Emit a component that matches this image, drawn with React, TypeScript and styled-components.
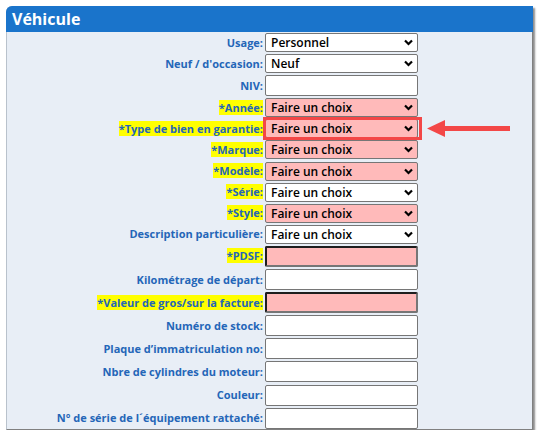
import { Fragment } from 'react'
import styled, { createGlobalStyle } from 'styled-components'

const GlobalStyle = createGlobalStyle`
	html, body {
		margin: 0;
		padding: 0;
		background: #ffffff;
	}
	body {
		font-family: 'Open Sans', 'Noto Sans', sans-serif;
	}
`

type Field = {
	label: string
	kind: 'select' | 'input'
	value?: string
	required?: boolean
	pink?: boolean
	pointed?: boolean
}

const fields: Field[] = [
	{ label: 'Usage', kind: 'select', value: 'Personnel' },
	{ label: "Neuf / d'occasion", kind: 'select', value: 'Neuf' },
	{ label: 'NIV', kind: 'input' },
	{ label: 'Année', kind: 'select', value: 'Faire un choix', required: true, pink: true },
	{ label: 'Type de bien en garantie', kind: 'select', value: 'Faire un choix', required: true, pink: true, pointed: true },
	{ label: 'Marque', kind: 'select', value: 'Faire un choix', required: true, pink: true },
	{ label: 'Modèle', kind: 'select', value: 'Faire un choix', required: true, pink: true },
	{ label: 'Série', kind: 'select', value: 'Faire un choix', required: true },
	{ label: 'Style', kind: 'select', value: 'Faire un choix', required: true, pink: true },
	{ label: 'Description particulière', kind: 'select', value: 'Faire un choix' },
	{ label: 'PDSF', kind: 'input', required: true, pink: true },
	{ label: 'Kilométrage de départ', kind: 'input' },
	{ label: 'Valeur de gros/sur la facture', kind: 'input', required: true, pink: true },
	{ label: 'Numéro de stock', kind: 'input' },
	{ label: 'Plaque d’immatriculation no', kind: 'input' },
	{ label: 'Nbre de cylindres du moteur', kind: 'input' },
	{ label: 'Couleur', kind: 'input' },
	{ label: 'N° de série de l´équipement rattaché', kind: 'input' },
]

const Panel = styled.section`
	margin: 6px 0 0 6px;
	width: 525px;
	background: #e8eef6;
	border: 1px solid #b9c2cc;
	border-right-color: #808080;
	border-bottom-color: #808080;
	border-radius: 6px 0 0 0;
	box-shadow: 2px 2px 2px rgba(0, 0, 0, 0.45);
`

const PanelHeader = styled.header`
	height: 26px;
	margin: -1px -1px 0 -1px;
	background: #1a74cb;
	border-radius: 6px 0 0 0;
	display: flex;
	align-items: center;
	padding-left: 6px;
`

const PanelTitle = styled.h2`
	margin: 0;
	font-size: 16px;
	font-weight: 700;
	color: #ffffff;
	line-height: 1;
`

const Form = styled.div`
	display: grid;
	grid-template-columns: 256px 153px;
	column-gap: 2px;
	row-gap: 2.1px;
	padding: 1px 0 0 0;
	align-items: center;
`

const Label = styled.label`
	justify-self: end;
	font-size: 11px;
	font-weight: 700;
	color: #2466b8;
	white-space: nowrap;
	line-height: 14px;
`

const Required = styled.span`
	background: #ffff00;
`

const ControlCell = styled.div`
	position: relative;
	display: flex;
`

const SelectBox = styled.select<{ pink?: boolean }>`
	appearance: none;
	width: 153px;
	height: 19px;
	margin: 0;
	padding: 0 0 0 5px;
	box-sizing: border-box;
	border: 1px solid #767676;
	border-radius: 2px;
	background: ${(props) => (props.pink ? '#ffbaba' : '#ffffff')};
	font-family: 'Open Sans', 'Noto Sans', sans-serif;
	font-size: 12px;
	font-weight: 600;
	color: #000000;
	outline: none;
`

const Chevron = styled.svg`
	position: absolute;
	right: 5px;
	top: 6px;
	pointer-events: none;
`

const TextBox = styled.input<{ pink?: boolean }>`
	width: 153px;
	height: 21px;
	margin: 0;
	box-sizing: border-box;
	padding: 0 4px;
	background: ${(props) => (props.pink ? '#ffbaba' : '#ffffff')};
	border: ${(props) => (props.pink ? '2px' : '1px')} solid #767676;
	border-top-color: ${(props) => (props.pink ? '#1e1e1e' : '#767676')};
	border-left-color: ${(props) => (props.pink ? '#1e1e1e' : '#767676')};
	border-radius: 2px;
	outline: none;
`

const Highlight = styled.div`
	position: absolute;
	left: -2px;
	top: -2px;
	right: -4px;
	bottom: -2px;
	border: 3px solid #f34747;
	pointer-events: none;
`

const Pointer = styled.svg`
	position: absolute;
	left: 162px;
	top: 1px;
`

function App() {
	return (
		<>
			<GlobalStyle />
			<Panel>
				<PanelHeader>
					<PanelTitle>Véhicule</PanelTitle>
				</PanelHeader>
				<Form>
					{fields.map((f, i) => (
						<Fragment key={i}>
							<Label>
								{f.required ? <Required>*{f.label}:</Required> : `${f.label}:`}
							</Label>
							<ControlCell>
								{f.kind === 'select' ? (
									<>
										<SelectBox pink={f.pink} defaultValue={f.value}>
											<option>{f.value}</option>
										</SelectBox>
										<Chevron width="9" height="7" viewBox="0 0 9 7">
											<path d="M1 1.5 L4.5 5 L8 1.5" fill="none" stroke="#000" strokeWidth="2.2" />
										</Chevron>
									</>
								) : (
									<TextBox pink={f.pink} />
								)}
								{f.pointed && (
									<>
										<Highlight />
										<Pointer width="83" height="17" viewBox="0 0 83 17">
											<polygon points="0,8.5 18,0 18,6 83,6 83,11 18,11 18,17" fill="#f34747" />
										</Pointer>
									</>
								)}
							</ControlCell>
						</Fragment>
					))}
				</Form>
			</Panel>
		</>
	)
}

export default App
